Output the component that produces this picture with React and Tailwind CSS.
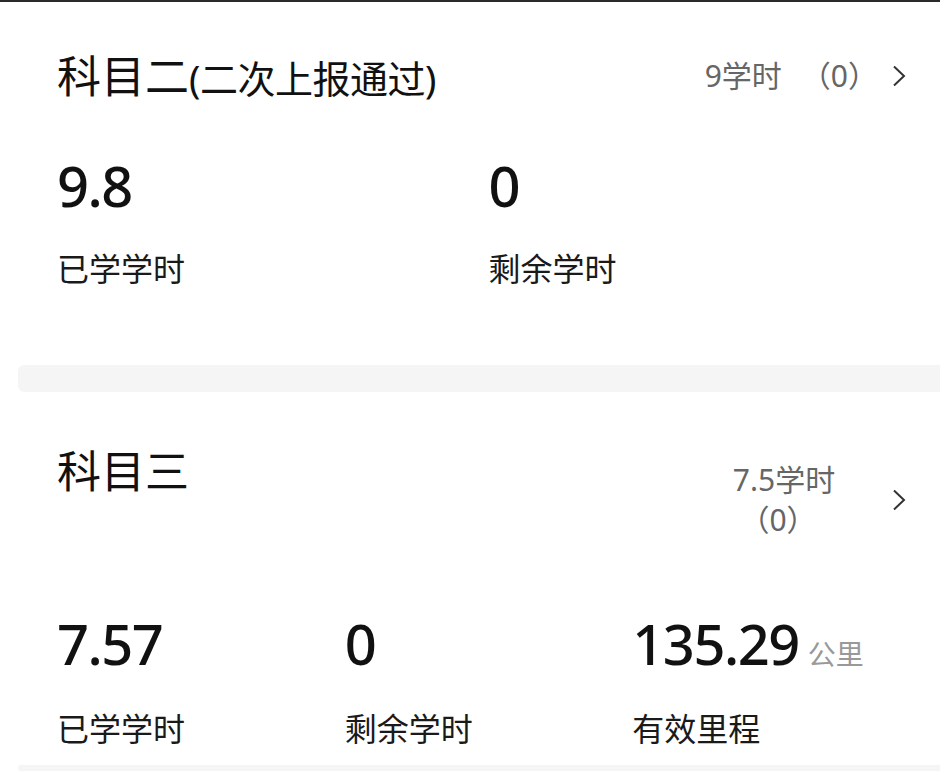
import React from "react";

const FONT = { fontFamily: '"Noto Sans", "Noto Sans CJK SC", sans-serif' };

// thin right chevron
const Chevron = () => (
  <svg width="14" height="22" viewBox="0 0 14 22" fill="none" className="shrink-0">
    <polyline points="2,1.5 12,11 2,20.5" stroke="#333" strokeWidth="2" strokeLinejoin="miter" />
  </svg>
);

const Stat = ({ value, unit, label, labelTop }) => (
  <div className="flex flex-col">
    <div className="flex items-baseline">
      <span className="text-[56px] leading-none tracking-[-1.5px] font-medium text-[#111]">{value}</span>
      {unit && <span className="ml-[9px] text-[28px] leading-none text-[#999]">{unit}</span>}
    </div>
    <div className={`text-[32px] leading-none text-[#1a1a1a] ${labelTop}`}>{label}</div>
  </div>
);

export default function App() {
  return (
    <div style={FONT} className="w-[940px] h-[771px] overflow-hidden bg-white border-t-2 border-[#2a2a2a] flex flex-col">
      {/* 科目二 */}
      <div className="h-[363px] shrink-0 flex flex-col pl-[57px] pr-[20px]">
        <div className="mt-[52px] h-[44px] flex items-center justify-between mr-[14px]">
          <div className="text-[44px] leading-none text-[#111] whitespace-nowrap">
            科目二
            <span className="text-[38px] tracking-[-0.5px]">(二次上报通过)</span>
          </div>
          <div className="flex items-center gap-[14px]">
            <span className="text-[30px] leading-none text-[#666] whitespace-pre">
              9学时<span className="ml-[19px]">（0）</span>
            </span>
            <Chevron />
          </div>
        </div>
        <div className="grid grid-cols-2 mt-[59px]">
          <Stat value="9.8" label="已学学时" labelTop="mt-[40px]" />
          <Stat value="0" label="剩余学时" labelTop="mt-[40px]" />
        </div>
      </div>

      <div className="h-[27px] shrink-0 ml-[18px] bg-[#f5f5f5] rounded-l-[6px]" />

      {/* 科目三 */}
      <div className="h-[373px] shrink-0 flex flex-col pl-[57px] pr-[20px]">
        <div className="mt-[57px] flex items-start justify-between mr-[14px]">
          <div className="text-[44px] leading-none text-[#111]">科目三</div>
          <div className="mt-[11px] flex items-center gap-[50px]">
            <div className="w-[116px] text-center text-[30px] leading-[40px] text-[#666]">
              <div>7.5学时</div>
              <div className="pr-[12px]">（0）</div>
            </div>
            <Chevron />
          </div>
        </div>
        <div className="grid grid-cols-3 mt-[75px]">
          <Stat value="7.57" label="已学学时" labelTop="mt-[42px]" />
          <Stat value="0" label="剩余学时" labelTop="mt-[42px]" />
          <Stat value="135.29" unit="公里" label="有效里程" labelTop="mt-[42px]" />
        </div>
      </div>

      <div className="h-[6px] shrink-0 ml-[18px] bg-[#f5f5f5] rounded-l-[6px]" />
    </div>
  );
}
